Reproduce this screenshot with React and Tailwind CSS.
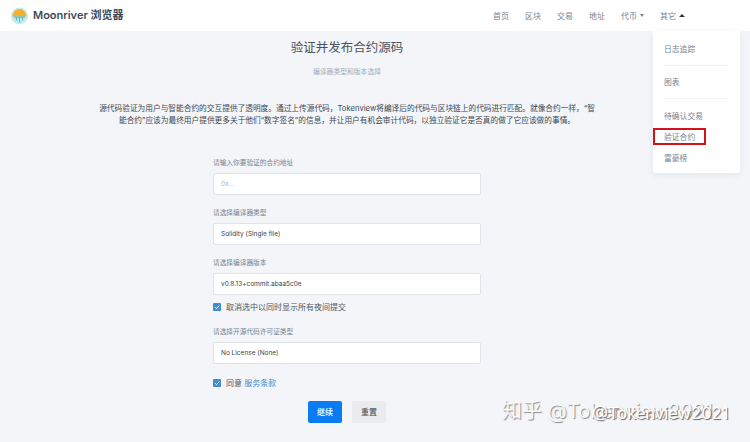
import React from 'react';

const FONT = "font-['Inter','Noto_Sans_CJK_SC',sans-serif]";

const navItems = ['首页', '区块', '交易', '地址'];

const Logo = () => (
  <svg width="17" height="18" viewBox="0 0 17 18">
    <circle cx="8.5" cy="9" r="8.5" fill="#c4ecf0" />
    <path d="M1.5 9.5a7 7.5 0 0 1 14 0z" fill="#f7b02e" />
    <path d="M3 9.5h11v1.2H3z" fill="#4dbccb" />
    <path d="M5.5 10.5v3M8.5 10.5v5M11.5 10.5v3" stroke="#4dbccb" strokeWidth="1.2" fill="none" />
  </svg>
);

const Field = ({ label, value, placeholder, className = '' }) => (
  <div className={`w-[268px] ${className}`}>
    <p className="text-[6.7px] leading-[10px] text-[#77838f]">{label}</p>
    <div className="mt-[5px] h-[22px] rounded-[2px] border border-[#dfe3ea] bg-white px-[7px] text-[6.5px] leading-[20px] text-[#39424e]">
      {placeholder ? <span className="text-[#a9b2bd]">{placeholder}</span> : value}
    </div>
  </div>
);

const Check = ({ children, className = '' }) => (
  <div className={`flex w-[268px] items-center gap-[5px] text-[8px] leading-[10px] text-[#4d5764] ${className}`}>
    <span className="flex h-[8px] w-[8px] items-center justify-center rounded-[1px] bg-[#3d8fd1]">
      <svg width="8" height="8" viewBox="0 0 8 8">
        <path d="M2 4.2l1.5 1.5 2.8-3.2" stroke="#fff" strokeWidth="1" fill="none" />
      </svg>
    </span>
    <span>{children}</span>
  </div>
);

export default function App() {
  return (
    <div className={`relative h-[442px] w-[750px] overflow-hidden bg-[#f3f5f9] ${FONT}`}>
      <header className="flex h-[31px] items-center justify-between bg-white pl-[11px] pr-[65px]">
        <div className="flex items-center gap-[5px]">
          <Logo />
          <span className="text-[11px] font-semibold text-[#3d4a58]">Moonriver 浏览器</span>
        </div>
        <nav className="flex items-center gap-[16px] text-[8px] text-[#77838f]">
          {navItems.map((item) => (
            <span key={item}>{item}</span>
          ))}
          <span className="flex items-center gap-[3px]">
            代币
            <span className="h-0 w-0 border-x-[2px] border-t-[3px] border-x-transparent border-t-[#77838f]" />
          </span>
          <span className="flex items-center gap-[3px]">
            其它
            <span className="h-0 w-0 border-x-[3px] border-b-[3px] border-x-transparent border-b-[#333]" />
          </span>
        </nav>
      </header>

      <main className="flex w-[694px] flex-col items-center">
        <h1 className="mt-[9px] text-[12.5px] leading-[16px] font-normal text-[#4a5460]">验证并发布合约源码</h1>
        <p className="mt-[11px] text-[6.8px] leading-[10px] text-[#a3acb6]">编译器类型和版本选择</p>
        <p className="mt-[26px] w-[500px] text-center text-[7.7px] leading-[12px] text-[#3f4853]">
          源代码验证为用户与智能合约的交互提供了透明度。通过上传源代码，Tokenview将编译后的代码与区块链上的代码进行匹配。就像合约一样，“智能合约”应该为最终用户提供更多关于他们“数字签名”的信息，并让用户有机会审计代码，以独立验证它是否真的做了它应该做的事情。
        </p>

        <Field className="mt-[31px]" label="请输入你要验证的合约地址" placeholder="0x..." />
        <Field className="mt-[13px]" label="请选择编译器类型" value="Solidity (Single file)" />
        <Field className="mt-[13px]" label="请选择编译器版本" value="v0.8.13+commit.abaa5c0e" />
        <Check className="mt-[7px]">取消选中以同时显示所有夜间提交</Check>
        <Field className="mt-[15px]" label="请选择开源代码许可证类型" value="No License (None)" />
        <Check className="mt-[14px]">
          同意 <span className="text-[#3d8fd1]">服务条款</span>
        </Check>
        <div className="mt-[13px] flex gap-[10px]">
          <button className="h-[22px] w-[34px] rounded-[2px] bg-[#0a7bf0] text-[8px] font-medium text-white">继续</button>
          <button className="h-[22px] w-[34px] rounded-[2px] bg-[#e9ebee] text-[8px] font-medium text-[#4d5764]">重置</button>
        </div>
      </main>

      {/* dropdown from the nav */}
      <div className="absolute left-[653px] top-[31px] w-[87px] rounded-b-[3px] bg-white px-[11px] text-[7.8px] text-[#77838f] shadow-[0_2px_6px_rgba(120,130,150,0.12)]">
        <p className="pt-[13px] pb-[11px] leading-[10px]">日志追踪</p>
        <div className="border-t border-[#f1f3f6]" />
        <p className="pt-[11px] pb-[11px] leading-[10px]">图表</p>
        <div className="border-t border-[#f1f3f6]" />
        <p className="pt-[12px] leading-[10px]">待确认交易</p>
        <p className="pt-[11px] leading-[10px]">验证合约</p>
        <p className="pt-[11px] pb-[10px] leading-[10px]">富豪榜</p>
      </div>
      <div className="absolute left-[653px] top-[128px] h-[17px] w-[53px] border-[2px] border-[#d5121c]" />

      {/* overlapped watermarks */}
      <div className="absolute left-[502px] top-[398px] text-[20px] leading-[26px] text-[#f8f9fb] [text-shadow:1px_1px_1px_#8a8a8a]">
        知乎 @Tokenview2021
      </div>
      <div className="absolute left-[592px] top-[402px] text-[16.5px] leading-[22px] text-white [text-shadow:1px_1px_1px_#666]">
        @Tokenview2021
      </div>
    </div>
  );
}
